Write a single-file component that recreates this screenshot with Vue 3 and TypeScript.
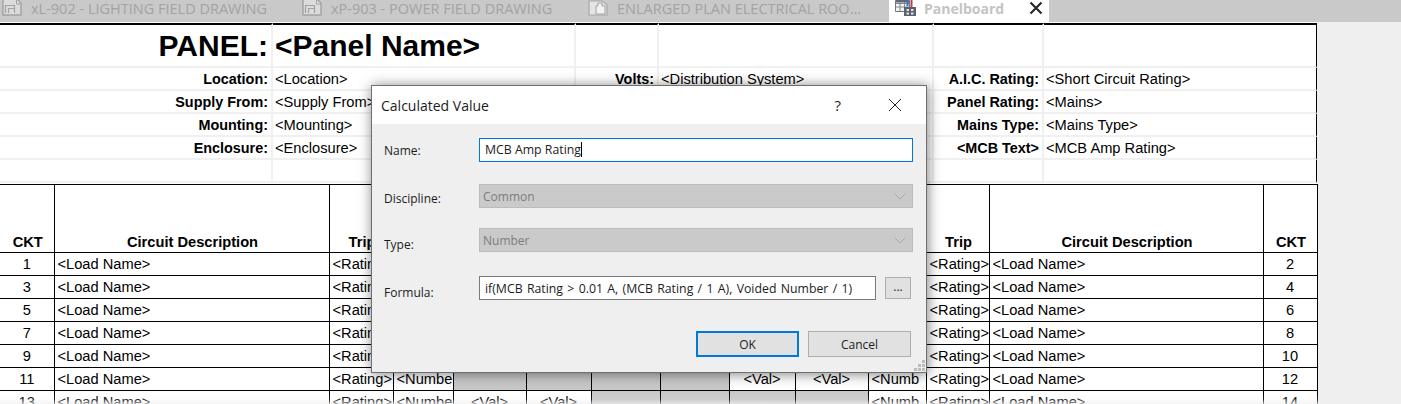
<script setup lang="ts">
interface Tab { label: string; width: number; kind: 'sheet' | 'plan' }
const tabs: Tab[] = [
  { label: 'xL-902 - LIGHTING FIELD DRAWING', width: 300, kind: 'sheet' },
  { label: 'xP-903 - POWER FIELD DRAWING', width: 286, kind: 'sheet' },
  { label: 'ENLARGED PLAN ELECTRICAL ROO...', width: 303, kind: 'plan' },
]
const infoRows = [
  ['Location:', '<Location>', 'Volts:', '<Distribution System>', 'A.I.C. Rating:', '<Short Circuit Rating>'],
  ['Supply From:', '<Supply From>', '', '', 'Panel Rating:', '<Mains>'],
  ['Mounting:', '<Mounting>', '', '', 'Mains Type:', '<Mains Type>'],
  ['Enclosure:', '<Enclosure>', '', '', '<MCB Text>', '<MCB Amp Rating>'],
  ['', '', '', '', '', ''],
]
const colWidths = [54, 275, 64, 60, 73, 65, 69, 69, 66, 73, 58, 63, 274, 54]
const patterns = [
  [true, true, false, false, false, false],
  [false, false, true, true, false, false],
  [false, false, false, false, true, true],
]
const rows = [0, 1, 2, 3, 4, 5, 6].map((i) => ({
  left: i * 2 + 1,
  right: i * 2 + 2,
  phases: patterns[i % 3],
}))
const gripDots: [number, number][] = [[8, 0], [4, 4], [8, 4], [0, 8], [4, 8], [8, 8]]
</script>

<template>
  <div class="page">
    <div class="tabs">
      <div v-for="t in tabs" :key="t.label" class="tab" :style="{ width: t.width + 'px' }">
        <svg v-if="t.kind === 'sheet'" class="tab-icon" width="20" height="16" viewBox="0 0 20 16">
          <path d="M1 -2H14L19 3V15H1Z" fill="#dcdcdc" stroke="#a2a2a2" stroke-width="1.400" />
          <path d="M3.500 13V5.500H12.500V13M6.500 13V8.500H12.500" fill="none" stroke="#a2a2a2" stroke-width="1.200" />
          <path d="M14.500 0V4H19" fill="none" stroke="#a2a2a2" />
        </svg>
        <svg v-else class="tab-icon" width="20" height="16" viewBox="0 0 20 16">
          <path d="M1 1H14L19 5V15H1Z" fill="#e4e4e4" stroke="#a8a8a8" stroke-width="1.200" />
          <path d="M8 14V6H10V3H14V6H17V14Z" fill="#f2f2f2" stroke="#a2a2a2" />
        </svg>
        <span class="tab-label">{{ t.label }}</span>
      </div>
      <div class="tab-active">
        <svg class="tab-icon" width="21" height="16" viewBox="0 0 21 16">
          <path d="M0.500 0.500H14.500V11.500H0.500Z" fill="#f4f4f4" stroke="#6d7682" />
          <path d="M1 3.500H14M1 7H14M5 1V11M9.500 1V11" stroke="#7f8894" />
          <path d="M1 0H14V2.500H1Z" fill="#5f6875" />
          <path d="M16.500 0V7" stroke="#c23b4b" stroke-width="2" />
          <path d="M12.500 0V6" stroke="#3c6fc4" stroke-width="2" />
          <path d="M9 7H21V16H9Z" fill="#59626e" />
          <path d="M11.500 9H14V11H11.500ZM16 9H18.500V11H16ZM11.500 12.500H14V14.500H11.500ZM16 12.500H18.500V14.500H16Z" fill="#e6e6e6" />
        </svg>
        <span class="active-label">Panelboard</span>
        <svg class="tab-close" width="14" height="14" viewBox="0 0 14 14">
          <path d="M1.500 1.500L12.500 12.500M12.500 1.500L1.500 12.500" stroke="#2a2a2a" stroke-width="2.200" fill="none" />
        </svg>
      </div>
    </div>

    <div class="sheet">
      <table class="info">
        <colgroup>
          <col class="i1" /><col class="i2" /><col class="i3" /><col class="i4" /><col class="i5" /><col class="i6" />
        </colgroup>
        <tbody>
          <tr class="title-row">
            <td class="panel-key">PANEL:</td>
            <td class="panel-val">&lt;Panel Name&gt;</td>
            <td></td><td></td><td></td><td></td>
          </tr>
          <tr v-for="(r, i) in infoRows" :key="i" class="info-row">
            <td v-for="(c, j) in r" :key="j" :class="j % 2 === 0 ? 'key' : 'val'">{{ c }}</td>
          </tr>
        </tbody>
      </table>

      <table class="grid">
        <colgroup>
          <col v-for="(w, i) in colWidths" :key="i" :style="{ width: w + 'px' }" />
        </colgroup>
        <thead>
          <tr>
            <th>CKT</th><th>Circuit Description</th><th>Trip</th><th>Poles</th>
            <th colspan="2">A</th><th colspan="2">B</th><th colspan="2">C</th>
            <th>Poles</th><th>Trip</th><th>Circuit Description</th><th>CKT</th>
          </tr>
        </thead>
        <tbody>
          <tr v-for="r in rows" :key="r.left">
            <td class="c">{{ r.left }}</td>
            <td>&lt;Load Name&gt;</td>
            <td>&lt;Rating&gt;</td>
            <td>&lt;Numbe</td>
            <td v-for="(on, k) in r.phases" :key="k" :class="on ? 'c' : 'shade'">{{ on ? '<Val>' : '' }}</td>
            <td>&lt;Numb</td>
            <td>&lt;Rating&gt;</td>
            <td>&lt;Load Name&gt;</td>
            <td class="c">{{ r.right }}</td>
          </tr>
        </tbody>
      </table>
    </div>

    <div class="fade"></div>

    <div class="dialog">
      <div class="dlg-title">
        <span class="dlg-caption">Calculated Value</span>
        <span class="dlg-help">?</span>
        <svg class="dlg-x" width="14" height="14" viewBox="0 0 14 14">
          <path d="M1 1L13 13M13 1L1 13" stroke="#222" stroke-width="1" fill="none" />
        </svg>
      </div>
      <div class="dlg-body">
        <div class="row row-name">
          <label class="lbl lbl-name">Name:</label>
          <div class="input focus">MCB Amp Rating<span class="caret"></span></div>
        </div>
        <div class="row row-disc">
          <label class="lbl lbl-low">Discipline:</label>
          <div class="select">
            <span>Common</span>
            <svg width="12" height="7" viewBox="0 0 12 7"><path d="M1 1L6 6L11 1" stroke="#a8a8a8" fill="none" /></svg>
          </div>
        </div>
        <div class="row row-type">
          <label class="lbl lbl-lower">Type:</label>
          <div class="select">
            <span>Number</span>
            <svg width="12" height="7" viewBox="0 0 12 7"><path d="M1 1L6 6L11 1" stroke="#a8a8a8" fill="none" /></svg>
          </div>
        </div>
        <div class="row row-formula">
          <label class="lbl lbl-lower">Formula:</label>
          <div class="input formula">if(MCB Rating &gt; 0.01 A, (MCB Rating / 1 A), Voided Number / 1)</div>
          <button class="dots" type="button">...</button>
        </div>
        <div class="actions">
          <button class="btn btn-ok" type="button">OK</button>
          <button class="btn" type="button">Cancel</button>
        </div>
      </div>
      <svg class="grip" width="11" height="11" viewBox="0 0 11 11">
        <rect v-for="(d, i) in gripDots" :key="i" :x="d[0]" :y="d[1]" width="3" height="3" fill="#bdbdbd" />
      </svg>
    </div>
  </div>
</template>

<style>
html, body { margin: 0; padding: 0; background: #efefef; }
</style>

<style scoped>
.page {
  position: relative;
  width: 1401px;
  height: 404px;
  overflow: hidden;
  background: #efefef;
  font-family: "Liberation Sans", Arial, sans-serif;
  color: #000;
}
.tabs {
  display: flex;
  height: 22px;
  background: #c9c9c9;
  overflow: hidden;
}
.tab {
  display: flex;
  align-items: center;
  gap: 9px;
  padding: 0 0 6px 2px;
  box-sizing: border-box;
  height: 22px;
  flex: none;
}
.tab-icon { flex: none; align-self: flex-start; }
.tab-label {
  font-family: "Open Sans", sans-serif;
  font-size: 14.500px;
  color: #a3a3a3;
  white-space: nowrap;
}
.tab-active {
  display: flex;
  align-items: flex-start;
  flex: none;
  width: 160px;
  height: 22px;
  box-sizing: border-box;
  padding-left: 6px;
  background: #fff;
}
.active-label {
  margin-left: 8px;
  font-family: "Open Sans", sans-serif;
  font-weight: 700;
  font-size: 14px;
  line-height: 17px;
  color: #c4c4c4;
  width: 105px;
}
.tab-close { margin-top: 1px; }

.sheet {
  width: 1317px;
  background: #fff;
  padding-top: 1px;
}
.info {
  table-layout: fixed;
  border-collapse: separate;
  border-spacing: 0;
  width: 1317px;
  font-size: 14.670px;
}
.i1 { width: 273px; } .i2 { width: 303px; } .i3 { width: 83px; }
.i4 { width: 275px; } .i5 { width: 110px; } .i6 { width: 273px; }
.info td {
  padding: 0;
  box-sizing: border-box;
  white-space: nowrap;
  overflow: hidden;
  border-right: 2px solid #f0f0f0;
  border-bottom: 2px solid #f0f0f0;
}
.info td:last-child { border-right: 1px solid #000; }
.title-row td {
  height: 45px;
  border-top: 2px solid #000;
}
.panel-key, .panel-val {
  font-size: 30px;
  font-weight: 700;
}
.panel-key { text-align: right; padding-right: 3px !important; }
.panel-val { padding-left: 2px !important; }
.info-row td { height: 23px; }
.key { text-align: right; font-weight: 700; font-size: 14.400px; padding-right: 3px !important; }
.val { padding-left: 2px !important; }

.grid {
  table-layout: fixed;
  border-collapse: collapse;
  width: 1317px;
  margin-top: 1px;
  font-size: 14.670px;
}
.grid th, .grid td {
  border: 1px solid #000;
  padding: 0 0 0 3px;
  box-sizing: border-box;
  white-space: nowrap;
  overflow: hidden;
}
.grid th:first-child, .grid td:first-child { border-left: none; }
.grid th {
  height: 68px;
  vertical-align: bottom;
  text-align: center;
  padding: 0 0 2px 2px;
}
.grid td { height: 23px; }
.grid .c { text-align: center; padding: 0; }
.grid .shade { background: #c8c8c8; }

.fade {
  position: absolute;
  left: 0;
  right: 0;
  bottom: 0;
  height: 12px;
  background: linear-gradient(rgba(239, 239, 239, 0), rgba(239, 239, 239, 0.12) 60%, rgba(239, 239, 239, 0.7));
}

.dialog {
  position: absolute;
  left: 371px;
  top: 85px;
  width: 556px;
  height: 288px;
  box-sizing: border-box;
  border: 1px solid #6f6f6f;
  background: #efefef;
  box-shadow: 1px 1px 12px rgba(0, 0, 0, 0.5);
  font-family: "Open Sans", sans-serif;
  font-size: 12px;
  color: #1c1c1c;
}
.dlg-title {
  display: flex;
  align-items: center;
  height: 38px;
  padding: 0 24px 0 9px;
  background: #fff;
}
.dlg-caption { font-size: 14px; flex: 1; }
.dlg-help { font-size: 15px; margin-right: 47px; }
.dlg-body { padding: 14px 13px 0 12px; }
.row { display: flex; align-items: flex-start; height: 24px; }
.row-disc { margin-top: 22px; }
.row-type { margin-top: 20px; }
.row-formula { margin-top: 24px; }
.lbl { flex: none; width: 95px; line-height: 24px; }
.lbl-name { padding-top: 1px; }
.lbl-low { padding-top: 3px; }
.lbl-lower { padding-top: 5px; }
.input {
  box-sizing: border-box;
  height: 24px;
  flex: 1;
  font-size: 12.300px;
  line-height: 22px;
  padding: 0 5px;
  background: #fff;
  border: 1px solid #7a7a7a;
  white-space: nowrap;
  overflow: hidden;
}
.focus { border-color: #0078d7; }
.caret {
  display: inline-block;
  width: 1px;
  height: 15px;
  background: #000;
  vertical-align: -3px;
}
.formula { flex: none; width: 397px; line-height: 23px; word-spacing: 1.100px; }
.select {
  box-sizing: border-box;
  display: flex;
  align-items: center;
  justify-content: space-between;
  flex: 1;
  height: 24px;
  padding: 0 6px 0 3px;
  background: #cacaca;
  border: 1px solid #bcbcbc;
  color: #7d7d7d;
}
.dots {
  box-sizing: border-box;
  width: 26px;
  height: 22px;
  margin: 1px 0 0 9px;
  padding: 0 0 4px;
  background: #e1e1e1;
  border: 1px solid #adadad;
  color: #1c1c1c;
  font: inherit;
}
.actions {
  display: flex;
  justify-content: flex-end;
  gap: 9px;
  margin-top: 31px;
  padding-right: 2px;
}
.btn {
  box-sizing: border-box;
  width: 103px;
  height: 26px;
  padding: 0;
  background: #e1e1e1;
  border: 1px solid #adadad;
  color: #1c1c1c;
  font: inherit;
}
.btn-ok { border: 2px solid #0078d7; }
.grip {
  position: absolute;
  right: 1px;
  bottom: 1px;
}
</style>
